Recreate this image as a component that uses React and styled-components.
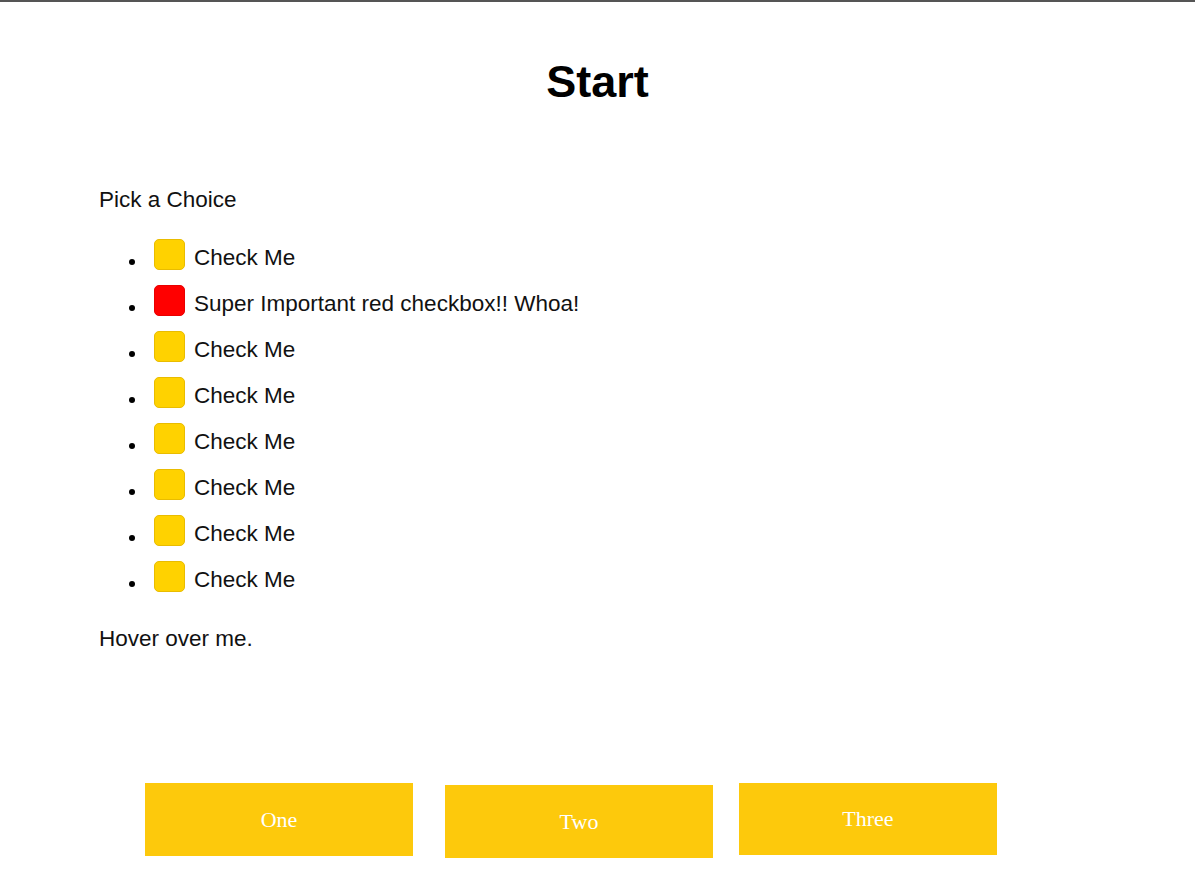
import styled, { createGlobalStyle } from "styled-components";

const GlobalStyle = createGlobalStyle`
    html, body {
        margin: 0;
        padding: 0;
        background: #fff;
    }
    body {
        font-family: "Liberation Sans", Arial, sans-serif;
        color: #111;
    }
`;

const Page = styled.div`
    border-top: 2px solid #555;
    min-height: 884px;
    padding: 0 0 0 99px;
`;

const Title = styled.h1`
    margin: 55px 0 0 -99px;
    font-size: 45px;
    line-height: 50px;
    font-weight: bold;
    text-align: center;
    color: #000;
`;

const Caption = styled.p`
    margin: ${({ $mt }) => $mt}px 0 0;
    font-size: 22.5px;
    line-height: 26px;
`;

const ChoiceList = styled.ul`
    margin: 22px 0 0;
    padding-left: 55px;
    list-style: none;
`;

const ChoiceItem = styled.li`
    position: relative;
    font-size: 22.5px;
    line-height: 46px;

    &::before {
        content: "";
        position: absolute;
        left: -25px;
        top: 24px;
        width: 6px;
        height: 6px;
        border-radius: 50%;
        background: #000;
    }
`;

const Box = styled.span`
    display: inline-block;
    box-sizing: border-box;
    width: 31px;
    height: 31px;
    margin-right: 9px;
    vertical-align: text-bottom;
    border-radius: 5px;
    background: ${({ $important }) => ($important ? "#ff0000" : "#ffd200")};
    border: 1px solid ${({ $important }) => ($important ? "#e80000" : "#e9bc00")};
`;

const ButtonRow = styled.div`
    display: flex;
    align-items: flex-start;
    margin: 131px 0 0 46px;
`;

const Button = styled.button`
    width: ${({ $w }) => $w}px;
    height: ${({ $h }) => $h}px;
    margin: ${({ $mt }) => $mt || 0}px 0 0 ${({ $ml }) => $ml || 0}px;
    border: none;
    padding: 0;
    background: #fdc90c;
    color: #fff;
    font-family: "Liberation Serif", "Times New Roman", serif;
    font-size: 22px;
    cursor: pointer;
`;

const choices = [
    { id: 1, label: "Check Me" },
    { id: 2, label: "Super Important red checkbox!! Whoa!", important: true },
    { id: 3, label: "Check Me" },
    { id: 4, label: "Check Me" },
    { id: 5, label: "Check Me" },
    { id: 6, label: "Check Me" },
    { id: 7, label: "Check Me" },
    { id: 8, label: "Check Me" },
];

export default function App() {
    return (
        <>
            <GlobalStyle />
            <Page>
                <Title>Start</Title>
                <Caption $mt={80}>Pick a Choice</Caption>
                <ChoiceList>
                    {choices.map(({ id, label, important }) => (
                        <ChoiceItem key={id}>
                            <Box $important={important} />
                            {label}
                        </ChoiceItem>
                    ))}
                </ChoiceList>
                <Caption $mt={23}>Hover over me.</Caption>
                <ButtonRow>
                    <Button $w={268} $h={73}>One</Button>
                    <Button $w={268} $h={73} $mt={2} $ml={32}>Two</Button>
                    <Button $w={258} $h={72} $ml={26}>Three</Button>
                </ButtonRow>
            </Page>
        </>
    );
}
